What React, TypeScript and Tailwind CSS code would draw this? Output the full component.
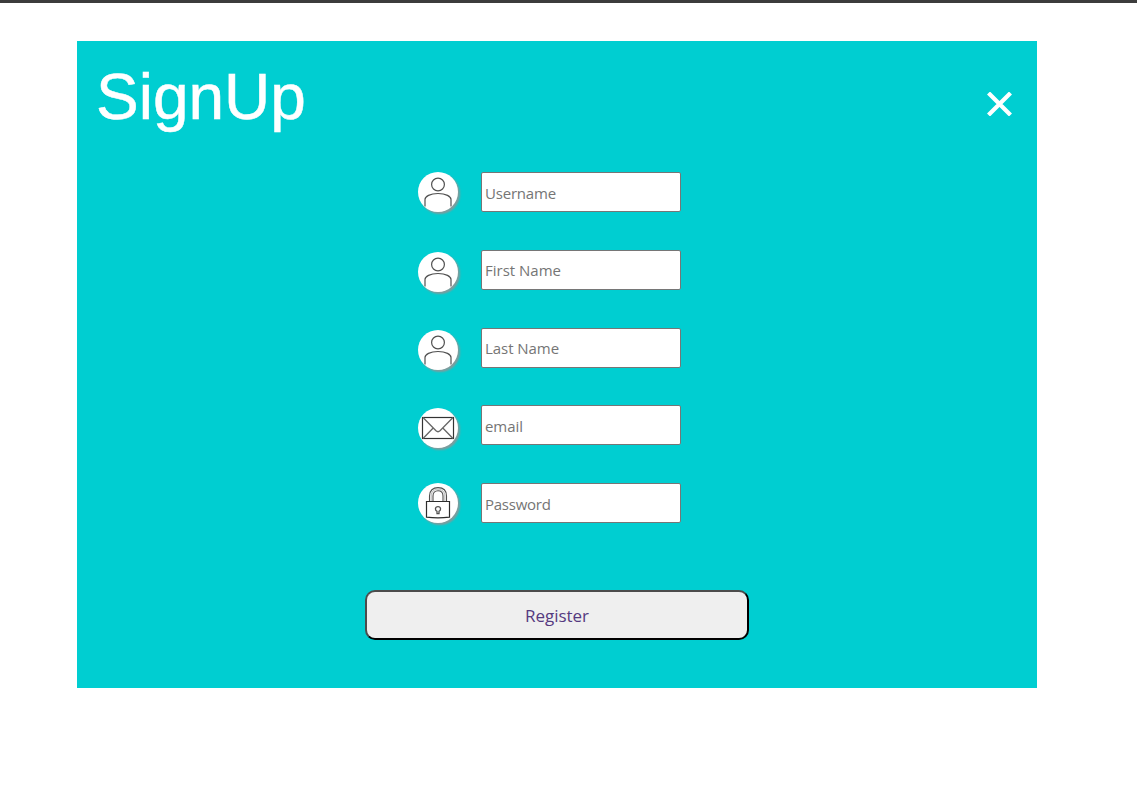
import React from "react";

function UserIcon() {
  return (
    <svg viewBox="0 0 40 40" className="size-10" fill="none" stroke="#505050" strokeWidth="1.2">
      <circle cx="20" cy="12.5" r="6.4" />
      <path d="M7 34.5V27.5C7 24.5 12 21.5 20 21.5S33 24.5 33 27.5V34.5" />
    </svg>
  );
}

function MailIcon() {
  return (
    <svg viewBox="0 0 40 40" className="size-10" fill="none" stroke="#444" strokeWidth="1.3">
      <rect x="4.5" y="9.5" width="31" height="21" strokeWidth="1.2" stroke="#333" />
      <path d="M5 9.5L18 22.8Q20 24.6 22 22.8L35 9.5M5 30.5L15.2 20M35 30.5L24.8 20" stroke="#666" />
    </svg>
  );
}

function LockIcon() {
  return (
    <svg viewBox="0 0 40 40" className="size-10" fill="none" stroke="#505050" strokeWidth="1.1">
      <path d="M8.5 18.5H31.5V34.2Q20 35.6 8.5 34.2Z" stroke="#2c2c2c" strokeWidth="1.2" />
      <path d="M11.5 18V13C11.5 7.5 15 4.6 20 4.6S28.5 7.5 28.5 13V18" />
      <path d="M13.2 18V13C13.2 8.7 16 6.2 20 6.2S26.8 8.7 26.8 13V18" stroke="#999" strokeWidth="0.7" />
      <path d="M15 18V13C15 9.8 17 7.8 20 7.8S25 9.8 25 13V18" />
      <path d="M19 28.3C16.8 27.4 16.8 23.6 20 23.6S23.2 27.4 21 28.3V30.6H19Z" strokeWidth="1.3" />
    </svg>
  );
}

const fields = [
  { label: "Username", type: "text", Icon: UserIcon, row: "", icon: "", input: "pt-px tracking-[-0.2px]" },
  { label: "First Name", type: "text", Icon: UserIcon, row: "mt-[38px]", icon: "mt-0.5", input: "pb-px tracking-[0px]" },
  { label: "Last Name", type: "text", Icon: UserIcon, row: "mt-[38px]", icon: "mt-0.5", input: "pb-px tracking-[-0.05px]" },
  { label: "email", type: "email", Icon: MailIcon, row: "mt-[37px]", icon: "mt-[3px]", input: "pt-px tracking-[-0.05px]" },
  { label: "Password", type: "password", Icon: LockIcon, row: "mt-[38px]", icon: "", input: "pt-px tracking-[-0.25px]" },
];

export default function App() {
  return (
    <div className="h-[785px] border-t-3 border-[#3c3c3c] bg-white pt-[38px] pl-[77px] font-['Open_Sans',sans-serif]">
      <form className="h-[647px] w-[960px] bg-[#00ced1]">
        <header className="flex h-[131px] items-start justify-between pt-5 pr-[25px] pl-[19px] text-white">
          <h1 className="font-['Liberation_Sans',sans-serif] text-[64px] leading-[73px] [-webkit-text-stroke:0.5px_white]">SignUp</h1>
          <button type="button" aria-label="Close" className="mt-[31px]">
            <svg viewBox="0 0 25 24" className="h-6 w-[25px]" stroke="currentColor" strokeWidth="4.2">
              <path d="M1.5 1L23.5 23M23.5 1L1.5 23" />
            </svg>
          </button>
        </header>
        <div className="pl-[341px]">
          {fields.map(({ label, type, Icon, row, icon, input }) => (
            <div key={label} className={`flex h-10 items-start gap-[23px] ${row}`}>
              <span className={`size-10 shrink-0 rounded-full bg-white shadow-[2px_2px_2px_#7f9c9d] ${icon}`}>
                <Icon />
              </span>
              <input
                type={type}
                placeholder={label}
                className={`h-10 w-[200px] rounded-[2px] border border-[#767676] bg-white px-[3px] text-[15px] placeholder:text-[#757575] ${input}`}
              />
            </div>
          ))}
        </div>
        <button
          type="button"
          className="mt-[67px] ml-72 block h-[50px] w-96 rounded-[10px] border-2 border-t-[#4c4c4c] border-r-black border-b-black border-l-[#4c4c4c] bg-[#efefef] pt-px text-[17px] tracking-[-0.02px] text-[#553a80]"
        >
          Register
        </button>
      </form>
    </div>
  );
}
